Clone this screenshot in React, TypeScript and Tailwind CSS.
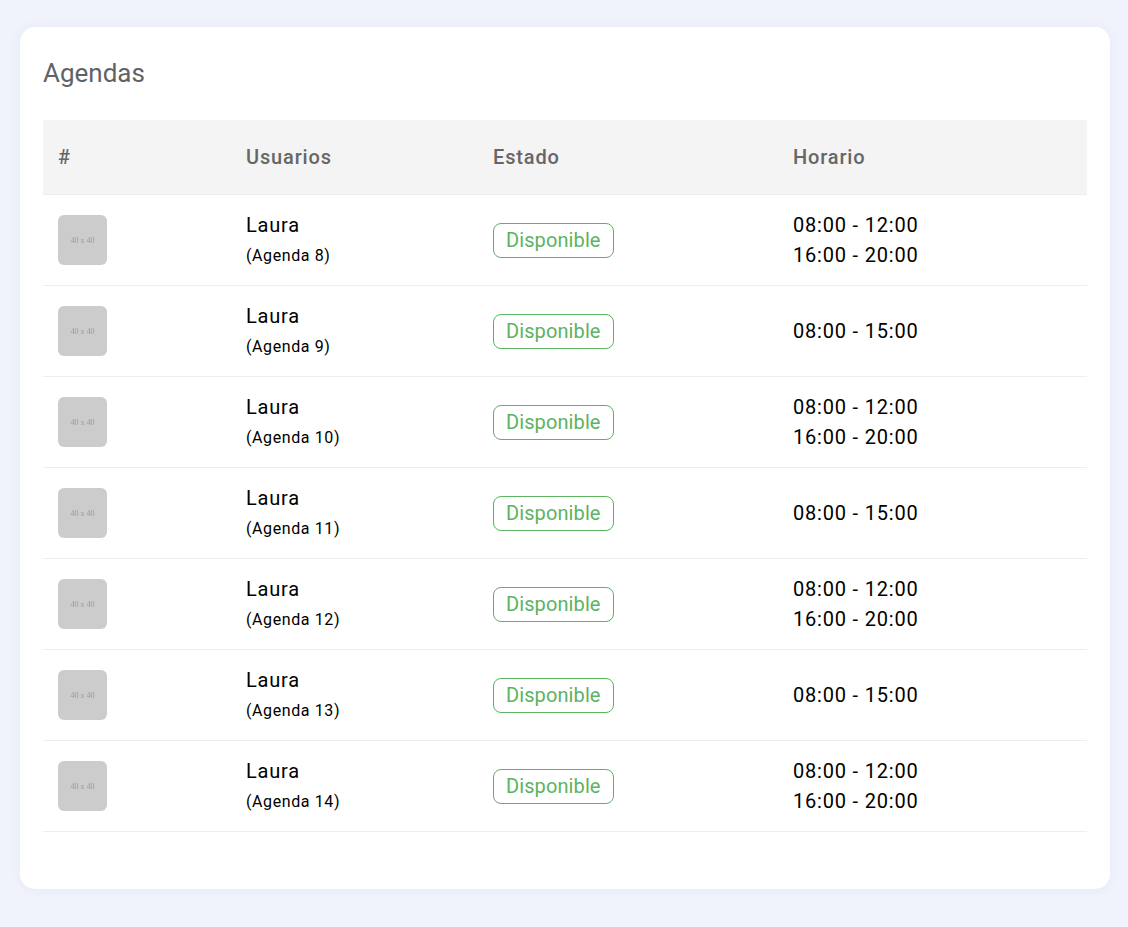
const rows = [
  { n: 8, two: true },
  { n: 9, two: false },
  { n: 10, two: true },
  { n: 11, two: false },
  { n: 12, two: true },
  { n: 13, two: false },
  { n: 14, two: true },
];

export default function App() {
  return (
    <div className="min-h-[927px] bg-[#f0f3fb] pt-[27px] pl-[20px] pr-[18px] font-['Roboto',sans-serif]">
      <div className="h-[862px] rounded-[15px] bg-white px-[23px] pt-[30px] shadow-[0_0_10px_rgba(200,205,230,0.25)]">
        <h1 className="text-[26px] leading-[32px] font-normal text-[#5f6368]">Agendas</h1>
        <table className="mt-[31px] w-[1044px] table-fixed border-collapse">
          <colgroup>
            <col className="w-[188px]" />
            <col className="w-[247px]" />
            <col className="w-[300px]" />
            <col className="w-[309px]" />
          </colgroup>
          <thead>
            <tr className="h-[74px] border-b border-[#eeeeee] bg-[#f4f4f4] text-left text-[20px] font-medium tracking-[0.85px] text-[#666666]">
              <th className="px-[15px] font-medium">#</th>
              <th className="px-[15px] font-medium">Usuarios</th>
              <th className="px-[15px] font-medium">Estado</th>
              <th className="px-[15px] font-medium">Horario</th>
            </tr>
          </thead>
          <tbody>
            {rows.map((r) => (
              <tr key={r.n} className="h-[91px] border-b border-[#eeeeee] text-black">
                <td className="px-[15px]">
                  <div className="flex h-[50px] w-[49px] items-center justify-center rounded-[6px] bg-[#cccccc] pt-[2px] font-['Liberation_Serif',serif] text-[8px] text-[#999999] blur-[0.5px]">
                    40 x 40
                  </div>
                </td>
                <td className="px-[15px] pt-[1px]">
                  <div className="text-[20px] leading-[30px] tracking-[0.8px]">Laura</div>
                  <div className="pt-[1px] text-[16px] leading-[30px] tracking-[0.6px]">(Agenda {r.n})</div>
                </td>
                <td className="px-[15px]">
                  <span className="mt-[1px] inline-block h-[35px] rounded-[8px] border border-[#5cb360] px-[12px] text-[20px] leading-[33px] tracking-[0.1px] text-[#5cb360]">
                    Disponible
                  </span>
                </td>
                <td className="px-[15px] text-[20px] leading-[30px] tracking-[0.8px]">
                  {r.two ? (
                    <>
                      <div>08:00 - 12:00</div>
                      <div>16:00 - 20:00</div>
                    </>
                  ) : (
                    <div>08:00 - 15:00</div>
                  )}
                </td>
              </tr>
            ))}
          </tbody>
        </table>
      </div>
    </div>
  );
}
